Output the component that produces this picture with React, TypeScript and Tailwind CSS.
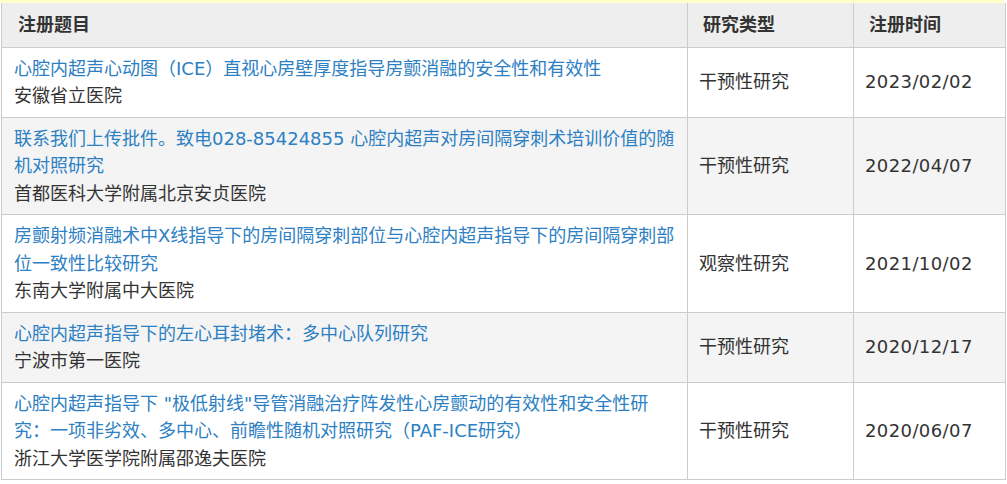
const ROWS = [
  {
    title: ["心腔内超声心动图（ICE）直视心房壁厚度指导房颤消融的安全性和有效性"],
    org: "安徽省立医院",
    type: "干预性研究",
    date: "2023/02/02",
  },
  {
    title: ["联系我们上传批件。致电028-85424855 心腔内超声对房间隔穿刺术培训价值的随", "机对照研究"],
    org: "首都医科大学附属北京安贞医院",
    type: "干预性研究",
    date: "2022/04/07",
  },
  {
    title: ["房颤射频消融术中X线指导下的房间隔穿刺部位与心腔内超声指导下的房间隔穿刺部", "位一致性比较研究"],
    org: "东南大学附属中大医院",
    type: "观察性研究",
    date: "2021/10/02",
  },
  {
    title: ["心腔内超声指导下的左心耳封堵术：多中心队列研究"],
    org: "宁波市第一医院",
    type: "干预性研究",
    date: "2020/12/17",
  },
  {
    title: ["心腔内超声指导下 \"极低射线\"导管消融治疗阵发性心房颤动的有效性和安全性研", "究：一项非劣效、多中心、前瞻性随机对照研究（PAF-ICE研究）"],
    org: "浙江大学医学院附属邵逸夫医院",
    type: "干预性研究",
    date: "2020/06/07",
  },
];

export default function App() {
  return (
    <div
      className="w-[1007px] h-[484px] bg-white overflow-hidden text-[18px] leading-[27.5px] text-[#333]"
      style={{ fontFamily: '"DejaVu Sans", "Noto Sans CJK SC", sans-serif' }}
    >
      <div className="h-[3px] w-[1004px] bg-[#ffffcc]" />
      <table className="ml-[1px] w-[1004px] border-collapse table-fixed">
        <colgroup>
          <col className="w-[686px]" />
          <col className="w-[166px]" />
          <col className="w-[152px]" />
        </colgroup>
        <thead>
          <tr className="bg-[#eeeeee]">
            <th className="border border-[#cccccc] border-t-0 pl-[16px] py-[8px] text-left font-bold">注册题目</th>
            <th className="border border-[#cccccc] border-t-0 pl-[15px] py-[8px] text-left font-bold">研究类型</th>
            <th className="border border-[#cccccc] border-t-0 pl-[15px] py-[8px] text-left font-bold">注册时间</th>
          </tr>
        </thead>
        <tbody>
          {ROWS.map((r, i) => (
            <tr key={i} className={i % 2 === 1 ? "bg-[#f4f4f4]" : "bg-white"}>
              <td className="border border-[#cccccc] pl-[12px] pt-[7px] pb-[7px] align-top">
                {r.title.map((line, j) => (
                  <div key={j} className="whitespace-nowrap text-[#2c80c3]">
                    {line}
                  </div>
                ))}
                <div className="whitespace-nowrap">{r.org}</div>
              </td>
              <td className="border border-[#cccccc] pl-[11px] align-middle">{r.type}</td>
              <td className="border border-[#cccccc] pl-[11px] align-middle tracking-[0.4px]">{r.date}</td>
            </tr>
          ))}
        </tbody>
      </table>
    </div>
  );
}
